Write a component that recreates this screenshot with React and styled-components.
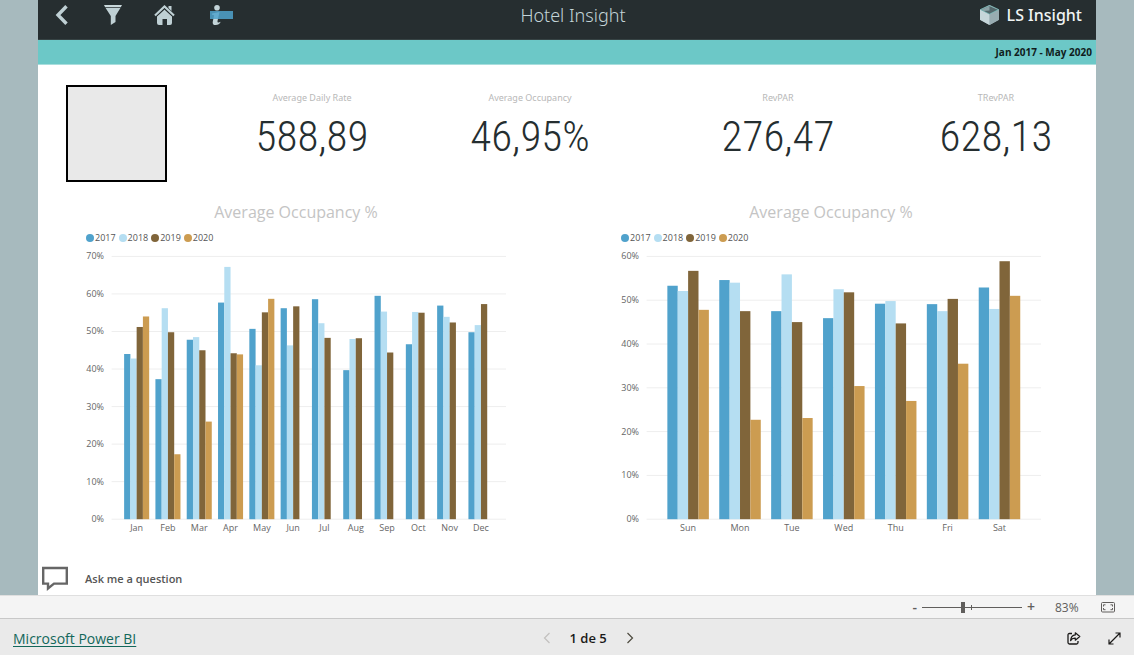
import React, { useState } from "react";
import styled, { createGlobalStyle } from "styled-components";

const GlobalStyle = createGlobalStyle`
  * {
    box-sizing: border-box;
  }

  body {
    margin: 0;
    font-family: "Open Sans", "Noto Sans", sans-serif;
  }

  button {
    display: flex;
    align-items: center;
    justify-content: center;
    padding: 0;
    border: 0;
    background: none;
    font: inherit;
    color: inherit;
    cursor: pointer;
  }
`;

const Container = styled.div`
  min-height: 100vh;
  display: flex;
  flex-direction: column;
`;

const Canvas = styled.main`
  flex: 1;
  display: flex;
  padding: 0 38px;
  background-color: #a7babe;
`;

const Report = styled.div`
  flex: 1;
  min-width: 0;
  display: flex;
  flex-direction: column;
  background-color: white;
`;

const Header = styled.header`
  display: grid;
  grid-template-columns: 1fr auto 1fr;
  align-items: center;
  height: 40px;
  padding: 0 0 10px 12px;
  background-color: #262e30;
  border-bottom: 1px solid #364344;
`;

const Nav = styled.nav`
  display: flex;
  gap: 27px;
`;

const Title = styled.h1`
  margin: 0;
  font-family: "Noto Sans", sans-serif;
  font-size: 18px;
  line-height: 28px;
  font-weight: 300;
  color: #c3d4d8;
`;

const Brand = styled.div`
  justify-self: end;
  display: flex;
  align-items: center;
  gap: 8px;
  padding-right: 14px;
  font-family: "Noto Sans", sans-serif;
  font-size: 16px;
  font-weight: 500;
  color: #f0f4f4;
`;

const Period = styled.div`
  padding: 0 4px;
  border-bottom: 1px solid #a9dedd;
  background-color: #6cc8c7;
  text-align: right;
  font-size: 10px;
  line-height: 24px;
  font-weight: 700;
  color: #101c1c;
`;

const Summary = styled.section`
  display: flex;
  margin-top: 20px;
  padding: 0 10px 0 28px;
`;

const Picture = styled.div`
  width: 101px;
  height: 97px;
  margin-right: 55px;
  border: 2px solid black;
  background-color: #e9e9e9;
`;

const Groups = styled.div`
  flex: 1;
  display: flex;
  gap: 68px;
`;

const Group = styled.div`
  flex: 1;
  display: flex;
  gap: 38px;
`;

const Kpi = styled.div`
  flex: 1;
  padding-top: 6px;
  text-align: center;
`;

const KpiLabel = styled.div`
  font-family: "Noto Sans", sans-serif;
  font-size: 9px;
  line-height: 14px;
  color: #b8b8b8;
`;

const KpiValue = styled.div`
  margin-top: 6px;
  font-family: "Roboto Condensed", "Liberation Sans Narrow", "Roboto",
    sans-serif;
  font-size: 43px;
  line-height: 50px;
  font-weight: 300;
  color: #252e30;
`;

const Charts = styled.section`
  display: flex;
  gap: 115px;
  margin-top: 18px;
  padding: 0 55px 0 48px;
`;

const ChartBox = styled.figure`
  flex: 1;
  min-width: 0;
  margin: 0;
`;

const ChartTitle = styled.figcaption`
  text-align: center;
  font-size: 16px;
  line-height: 24px;
  color: #c4c4c4;
`;

const Legend = styled.div`
  display: flex;
  gap: 3px;
  margin-top: 8px;
  font-size: 9px;
  line-height: 12px;
  color: #555;
`;

const LegendItem = styled.span`
  display: flex;
  align-items: center;
  gap: 1px;

  &::before {
    content: "";
    width: 8px;
    height: 8px;
    border-radius: 50%;
    background-color: ${(props) => props.$color};
  }
`;

const Plot = styled.svg`
  display: block;
  width: 100%;
  overflow: visible;

  line {
    stroke: #eee;
  }

  text {
    font-size: 9px;
    fill: #666;
  }
`;

const Ask = styled.button`
  && {
    align-self: flex-start;
    gap: 17px;
    margin-top: auto;
    padding: 0 0 4px 4px;
    font-size: 11px;
    font-weight: 600;
    color: #555;
  }
`;

const ZoomBar = styled.div`
  display: flex;
  align-items: center;
  justify-content: flex-end;
  height: 23px;
  padding-right: 19px;
  border-top: 1px solid #dfdfdf;
  background-color: #f4f4f4;
  font-size: 12px;
  color: #605e5c;
`;

const Step = styled.button`
  && {
    font-size: 14px;
    line-height: 16px;
    font-weight: 600;
  }
`;

const Slider = styled.input`
  appearance: none;
  width: 100px;
  height: 12px;
  margin: 0 5px;
  background: linear-gradient(#605e5c, #605e5c) center / 100% 1px no-repeat,
    linear-gradient(#605e5c, #605e5c) center / 1px 5px no-repeat;
  cursor: pointer;

  &::-webkit-slider-thumb {
    appearance: none;
    width: 4px;
    height: 11px;
    background-color: #605e5c;
  }
`;

const Percent = styled.output`
  width: 24px;
  margin: 0 22px 0 20px;
`;

const Footer = styled.footer`
  display: flex;
  align-items: center;
  justify-content: space-between;
  height: 37px;
  padding: 2px 0 0 13px;
  border-top: 1px solid #c8c8c8;
  background-color: #eaeaea;
`;

const Link = styled.a`
  font-size: 14px;
  color: #12675a;
  text-underline-offset: 2px;
`;

const Pager = styled.div`
  display: flex;
  align-items: center;
  gap: 19px;
  font-size: 13px;
  font-weight: 600;
  color: #1b1a19;
`;

const Actions = styled.div`
  display: flex;
  padding-left: 14px;

  button {
    width: 40px;
    height: 32px;
  }
`;

const series = [
  { year: "2017", color: "#50a2cc" },
  { year: "2018", color: "#b5def2" },
  { year: "2019", color: "#80653a" },
  { year: "2020", color: "#cc9c51" },
];

const byMonth = [
  ["Jan", 44.0, 42.8, 51.2, 54.0],
  ["Feb", 37.3, 56.2, 49.8, 17.3],
  ["Mar", 47.8, 48.5, 45.0, 26.0],
  ["Apr", 57.7, 67.2, 44.2, 43.9],
  ["May", 50.7, 41.0, 55.1, 58.7],
  ["Jun", 56.2, 46.3, 56.7],
  ["Jul", 58.6, 52.2, 48.3],
  ["Aug", 39.7, 48.0, 48.2],
  ["Sep", 59.5, 55.3, 44.4],
  ["Oct", 46.6, 55.2, 55.0],
  ["Nov", 56.9, 53.9, 52.4],
  ["Dec", 49.8, 51.7, 57.3],
];

const byWeekday = [
  ["Sun", 53.3, 52.1, 56.7, 47.8],
  ["Mon", 54.6, 54.0, 47.5, 22.7],
  ["Tue", 47.5, 55.9, 45.0, 23.1],
  ["Wed", 45.9, 52.5, 51.8, 30.4],
  ["Thu", 49.2, 49.8, 44.7, 27.0],
  ["Fri", 49.1, 47.5, 50.3, 35.5],
  ["Sat", 52.9, 48.0, 58.9, 51.0],
];

const kpis = [
  [
    ["Average Daily Rate", "588,89"],
    ["Average Occupancy", "46,95%"],
  ],
  [
    ["RevPAR", "276,47"],
    ["TRevPAR", "628,13"],
  ],
];

const Chart = ({ data, max }) => {
  const left = 25.6;
  const width = 394.4;
  const base = 275.2;
  const height = 262.8;
  const step = width / (data.length + 0.6);
  const bar = (step * 0.8) / 4;
  const ticks = [];
  for (let t = 0; t <= max; t += 10) ticks.push(t);

  return (
    <ChartBox>
      <ChartTitle>Average Occupancy %</ChartTitle>
      <Legend>
        {series.map((s) => (
          <LegendItem key={s.year} $color={s.color}>
            {s.year}
          </LegendItem>
        ))}
      </Legend>
      <Plot viewBox="0 0 420 296" role="img" aria-label="Average Occupancy %">
        {ticks.map((t) => {
          const y = base - (t / max) * height;
          return (
            <g key={t}>
              <line x1={left} x2={left + width} y1={y} y2={y} />
              <text x="18" y={y + 3} textAnchor="end">
                {t}%
              </text>
            </g>
          );
        })}
        {data.map(([label, ...values], i) => {
          const x = left + step * (i + 0.4);
          return (
            <g key={label}>
              {values.map((v, j) => (
                <rect
                  key={series[j].year}
                  x={x + j * bar}
                  y={base - (v / max) * height}
                  width={bar}
                  height={(v / max) * height}
                  fill={series[j].color}
                />
              ))}
              <text x={x + bar * 2} y="287" textAnchor="middle">
                {label}
              </text>
            </g>
          );
        })}
      </Plot>
    </ChartBox>
  );
};

const BackIcon = () => (
  <svg width="24" height="20" viewBox="0 0 24 20">
    <path d="M16.500 1.200 8 10l8.500 8.800" fill="none" stroke="#bfd0d4" strokeWidth="3.400" />
  </svg>
);

const FilterIcon = () => (
  <svg width="24" height="20" viewBox="0 0 24 20">
    <path d="M3 0h18l-1.200 2.200H4.200z" fill="#c9d8db" />
    <path d="M4.600 3h14.800L14.500 11v6L9.800 20V11z" fill="#bfd0d4" />
  </svg>
);

const HomeIcon = () => (
  <svg width="24" height="20" viewBox="0 0 24 20">
    <path d="M16.500 1h3v5l-3-3z" fill="#bfd0d4" />
    <path d="m3 10.500 9.500-9 9.500 9" fill="none" stroke="#bfd0d4" strokeWidth="2.200" />
    <path
      d="M5 11.500 12.500 4.600 20 11.500V18q0 2-2 2h-3v-6h-4.500v6H7q-2 0-2-2z"
      fill="#bfd0d4"
    />
    <path d="m4.500 11.400 8-7.500 8 7.500" fill="none" stroke="#262e30" strokeWidth=".9" />
  </svg>
);

const InfoIcon = () => (
  <svg width="30" height="20" viewBox="0 0 30 20">
    <circle cx="14" cy="2.800" r="2.800" fill="#c3d4d8" />
    <path
      d="M9 8.500 16.500 7l-2 9q-.4 1.700 1.200 1.500l2-.8q-1.500 3.300-5 3.300-3.700 0-2.900-3.600l1.300-6.200L9 9.800z"
      fill="#c3d4d8"
    />
    <path d="M7 6h23v8H7z" fill="#50a2cc" fillOpacity=".85" />
  </svg>
);

const Cube = () => (
  <svg width="19" height="20" viewBox="0 0 19 20">
    <path d="M0 4.500 9.500 0 19 4.500v10.300L9.500 20 0 14.800z" fill="#a9bcc1" />
    <path d="M1 4.800 9.500 1 18 4.800 9.500 9z" fill="#54686c" />
    <path d="M9.500 1v4.500L3.500 6 1 4.800z" fill="#8ca2a6" />
    <path d="M0 4.500 9.500 9.500V20L0 14.800z" fill="#c6d6da" />
    <path d="M19 4.500 9.500 9.500V20L19 14.800z" fill="#98acb1" />
    <path d="M.5 4.500 9.500.4l9 4.100-9 4.600z" fill="none" stroke="#66b5b1" strokeWidth=".6" />
  </svg>
);

const ChatIcon = () => (
  <svg width="26" height="25" viewBox="0 0 26 25">
    <path
      d="M1.200 2h23.600v15.600H12L6 22.500v-4.900H1.200z"
      fill="none"
      stroke="#666"
      strokeWidth="2.400"
    />
  </svg>
);

const Chevron = ({ next }) => (
  <svg width="8" height="12" viewBox="0 0 8 12">
    <path
      d={next ? "m1.500 1 5 5-5 5" : "m6.500 1-5 5 5 5"}
      fill="none"
      stroke={next ? "#4d4a3e" : "#c2c0be"}
      strokeWidth="1.200"
    />
  </svg>
);

const FitIcon = () => (
  <svg width="14" height="11" viewBox="0 0 14 11">
    <rect x=".5" y=".5" width="13" height="9.500" rx="1" fill="none" stroke="#605e5c" />
    <path
      d="M4.500 2.800h-2v1.700M2.500 6v1.700h2M9.500 2.800h2v1.700M11.500 6v1.700h-2"
      fill="none"
      stroke="#605e5c"
    />
  </svg>
);

const ShareIcon = () => (
  <svg width="14" height="13" viewBox="0 0 14 13">
    <path
      d="M5 1.500H2.500q-1.500 0-1.500 1.500v7.500Q1 12 2.500 12h7q1.500 0 1.500-1.500V9"
      fill="none"
      stroke="#1b1a19"
      strokeWidth="1.300"
    />
    <path
      d="M8.300.8 12.800 4.500 8.300 8.200V6.200Q5 6 3.600 8.600 4 3.200 8.300 2.900z"
      fill="none"
      stroke="#1b1a19"
      strokeWidth="1.200"
      strokeLinejoin="round"
    />
  </svg>
);

const ExpandIcon = () => (
  <svg width="13" height="13" viewBox="0 0 13 13">
    <path
      d="M1 12 12 1M7.500 1H12v4.500M1 7.500V12h4.500"
      fill="none"
      stroke="#1b1a19"
      strokeWidth="1.200"
    />
  </svg>
);

const App = () => {
  const [zoom, setZoom] = useState(83);

  return (
    <Container>
      <GlobalStyle />
      <Canvas>
        <Report>
          <Header>
            <Nav>
              <button aria-label="Back">
                <BackIcon />
              </button>
              <button aria-label="Filter">
                <FilterIcon />
              </button>
              <button aria-label="Home">
                <HomeIcon />
              </button>
              <button aria-label="Info">
                <InfoIcon />
              </button>
            </Nav>
            <Title>Hotel Insight</Title>
            <Brand>
              <Cube />
              LS Insight
            </Brand>
          </Header>
          <Period>Jan 2017 - May 2020</Period>
          <Summary>
            <Picture />
            <Groups>
              {kpis.map((group, i) => (
                <Group key={i}>
                  {group.map(([label, value]) => (
                    <Kpi key={label}>
                      <KpiLabel>{label}</KpiLabel>
                      <KpiValue>{value}</KpiValue>
                    </Kpi>
                  ))}
                </Group>
              ))}
            </Groups>
          </Summary>
          <Charts>
            <Chart data={byMonth} max={70} />
            <Chart data={byWeekday} max={60} />
          </Charts>
          <Ask>
            <ChatIcon />
            Ask me a question
          </Ask>
        </Report>
      </Canvas>
      <ZoomBar>
        <Step aria-label="Zoom out" onClick={() => setZoom(zoom - 10)}>
          -
        </Step>
        <Slider
          type="range"
          aria-label="Zoom"
          min="10"
          max="190"
          value={zoom}
          onChange={(e) => setZoom(Number(e.target.value))}
        />
        <Step aria-label="Zoom in" onClick={() => setZoom(zoom + 10)}>
          +
        </Step>
        <Percent>{zoom}%</Percent>
        <button aria-label="Fit to page">
          <FitIcon />
        </button>
      </ZoomBar>
      <Footer>
        <Link href="#">Microsoft Power BI</Link>
        <Pager>
          <button aria-label="Previous page">
            <Chevron />
          </button>
          <span>1 de 5</span>
          <button aria-label="Next page">
            <Chevron next />
          </button>
        </Pager>
        <Actions>
          <button aria-label="Share">
            <ShareIcon />
          </button>
          <button aria-label="Full screen">
            <ExpandIcon />
          </button>
        </Actions>
      </Footer>
    </Container>
  );
};

export default App;
